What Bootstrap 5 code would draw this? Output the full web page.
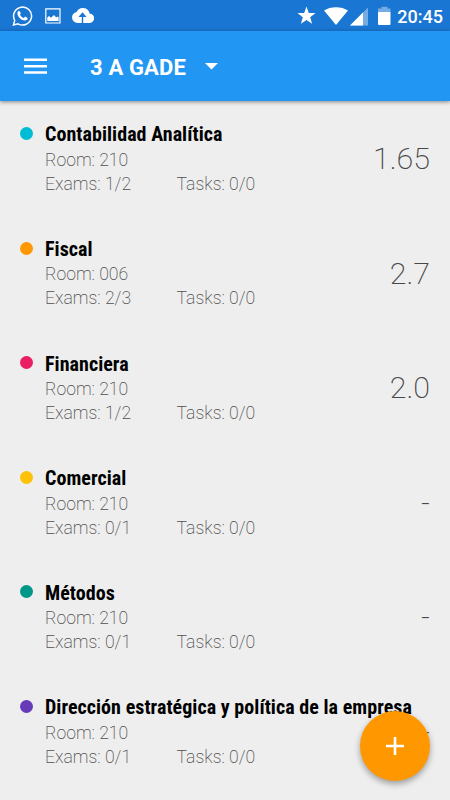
<!DOCTYPE html>
<html lang="es">
<head>
<meta charset="utf-8">
<meta name="viewport" content="width=device-width, initial-scale=1">
<title>3 A GADE</title>
<link href="https://cdn.jsdelivr.net/npm/bootstrap@5.3.0/dist/css/bootstrap.min.css" rel="stylesheet">
<style>
body{font-family:Roboto,"Liberation Sans",sans-serif;background:#eee;height:800px;overflow:hidden}
.status{height:31px;background:#1976d2;padding:0 7px 0 12px}
.clock{font-size:18px;line-height:31px;font-weight:500;margin:1px 0 0 6px}
.appbar{height:70px;background:#2196f3;box-shadow:0 1px 4px rgba(0,0,0,.45);padding-left:23.5px;z-index:1}
.appbar-title{font-size:22px;font-weight:700;line-height:70px;letter-spacing:.15px;margin:3px 0 0 43.5px}
.icon-picture{margin-left:12px}
.icon-cloud{margin-left:11px}
.caret-down{margin-left:18.5px}
.subjects{padding-top:21px}
.subject{height:114.6px;padding:0 20px}
.dot{width:13px;height:13px;margin:5px 12px 0 0}
.dot-cyan{background:#00bcd4}
.dot-orange{background:#ff9800}
.dot-pink{background:#e91e63}
.dot-amber{background:#ffc107}
.dot-teal{background:#009688}
.dot-purple{background:#673ab7}
.name{font-family:"Roboto Condensed",Roboto,sans-serif;font-size:20px;letter-spacing:.045px;line-height:24px;font-weight:700;color:#000;white-space:nowrap;padding-top:.35px;margin-bottom:1.55px}
.info{font-size:17.6px;line-height:24px;font-weight:200;color:#505050}
.exams{width:131.5px}
.details{width:0}
.score{font-size:30.4px;line-height:36px;font-weight:200;color:#484848;margin-top:19px}
.fab{width:70px;height:70px;left:360px;top:711px;background:#ff9800;box-shadow:0 3px 6px rgba(0,0,0,.35);z-index:2}
.fab:hover{background:#ff9800}
</style>
<script src="https://cdn.jsdelivr.net/npm/bootstrap@5.3.0/dist/js/bootstrap.bundle.min.js"></script>
</head>
<body class="position-relative">
<header class="status d-flex align-items-center text-white">
<svg width="21" height="22" viewBox="0 0 21 22" fill="none"><path d="M1.5 20 2.7 15.4A9 9 0 1 1 6 18.8Z" stroke="#fff" stroke-width="1.5"/><path d="M7.4 5.9c-.6-.3-2.2.6-2 2.5.3 3.4 4 7 7.5 7 1.8 0 3-1.3 2.7-2.5l-2.5-1.3-1.3 1.4c-1.7-.6-3.1-1.9-3.8-3.5l.9-1.2Z" fill="#fff"/></svg>
<svg class="icon-picture" width="16" height="16" viewBox="0 0 16 16"><path d="M.8.8h14.2v14.2H.8z" fill="none" stroke="#fff" stroke-width="1.2"/><path d="M2.3 13V9.5L4 8l2 1.7 3-2.7 2.2 2.4 1.5-1 .9.9V13z" fill="#fff"/></svg>
<svg class="icon-cloud" width="22" height="17" viewBox="0 0 22 17"><path d="M17.6 6.4A6.9 6.9 0 0 0 4.6 4.9 5.6 5.6 0 0 0 5.6 16H17a4.8 4.8 0 0 0 .6-9.6Z" fill="#fff"/><path d="M10.5 5.3 14.5 9.9h-3.3V16H9.8V9.9H6.5Z" fill="#1976d2"/></svg>
<svg class="ms-auto" width="94" height="20" viewBox="0 0 94 20" fill="#fff"><path d="m9.5 .5 2.3 6.4 6.7.2-5.3 4.2 1.9 6.5L9.5 14 3.9 17.8l1.9-6.5L.5 7.1l6.7-.2Z"/><path d="M27 4.6C33.500.1 44.500.1 51 4.6L39 19Z"/><path d="M71 1.6V19.5H53Z" opacity=".4"/><path d="M66 6.5V19.500H53Z"/><path d="M84.500.8h6V2.500H93.500V6H81V2.500h3.500Z" opacity=".4"/><path d="M81 6h12.500v12a1 1 0 0 1-1 1H82a1 1 0 0 1-1-1Z"/></svg>
<span class="clock">20:45</span>
</header>
<nav class="appbar d-flex align-items-center text-white position-relative">
<svg width="23" height="16" viewBox="0 0 23 16"><path d="M0 1.7h23M0 8.2h23M0 14.5h23" stroke="#fff" stroke-width="2.6"/></svg>
<h1 class="appbar-title">3 A GADE</h1>
<svg class="caret-down" width="13" height="7" viewBox="0 0 13 7"><path d="M0 0h13L6.5 6.5Z" fill="#fff"/></svg>
</nav>
<main class="subjects">
<section class="subject d-flex">
<span class="dot dot-cyan rounded-circle flex-shrink-0"></span>
<div class="details flex-grow-1"><div class="name">Contabilidad Analítica</div><div class="info">Room: 210</div><div class="info d-flex"><span class="exams">Exams: 1/2</span><span>Tasks: 0/0</span></div></div>
<div class="score">1.65</div>
</section>
<section class="subject d-flex">
<span class="dot dot-orange rounded-circle flex-shrink-0"></span>
<div class="details flex-grow-1"><div class="name">Fiscal</div><div class="info">Room: 006</div><div class="info d-flex"><span class="exams">Exams: 2/3</span><span>Tasks: 0/0</span></div></div>
<div class="score">2.7</div>
</section>
<section class="subject d-flex">
<span class="dot dot-pink rounded-circle flex-shrink-0"></span>
<div class="details flex-grow-1"><div class="name">Financiera</div><div class="info">Room: 210</div><div class="info d-flex"><span class="exams">Exams: 1/2</span><span>Tasks: 0/0</span></div></div>
<div class="score">2.0</div>
</section>
<section class="subject d-flex">
<span class="dot dot-amber rounded-circle flex-shrink-0"></span>
<div class="details flex-grow-1"><div class="name">Comercial</div><div class="info">Room: 210</div><div class="info d-flex"><span class="exams">Exams: 0/1</span><span>Tasks: 0/0</span></div></div>
<div class="score">-</div>
</section>
<section class="subject d-flex">
<span class="dot dot-teal rounded-circle flex-shrink-0"></span>
<div class="details flex-grow-1"><div class="name">Métodos</div><div class="info">Room: 210</div><div class="info d-flex"><span class="exams">Exams: 0/1</span><span>Tasks: 0/0</span></div></div>
<div class="score">-</div>
</section>
<section class="subject d-flex">
<span class="dot dot-purple rounded-circle flex-shrink-0"></span>
<div class="details flex-grow-1"><div class="name">Dirección estratégica y política de la empresa</div><div class="info">Room: 210</div><div class="info d-flex"><span class="exams">Exams: 0/1</span><span>Tasks: 0/0</span></div></div>
<div class="score">-</div>
</section>
</main>
<button class="fab btn rounded-circle border-0 p-0 position-absolute d-flex align-items-center justify-content-center" aria-label="+"><svg width="18" height="18" viewBox="0 0 18 18"><path d="M9 0v18M0 9h18" stroke="#fff" stroke-width="2.6"/></svg></button>
</body>
</html>
